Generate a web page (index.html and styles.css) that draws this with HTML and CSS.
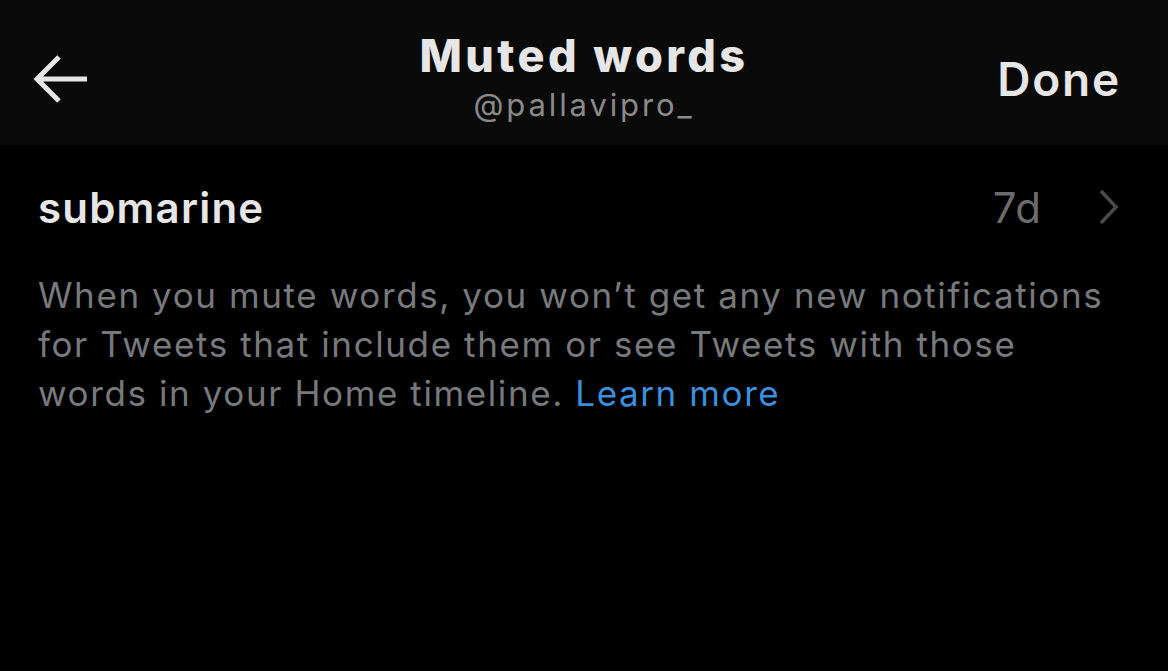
FILE: index.html
```html
<!DOCTYPE html>
<html lang="en">

<head>
    <meta charset="UTF-8">
    <meta name="viewport" content="width=device-width, initial-scale=1.0">
    <title>Muted words</title>
    <link rel="stylesheet" href="styles.css">
</head>

<body>
    <header class="top-bar">
        <a class="back-btn" href="#" aria-label="Back">
            <svg width="56" height="48" viewBox="0 0 56 48">
                <path d="M4 24 H54 M26 2 L4 24 L26 46" fill="none" stroke="#e6e6e6" stroke-width="5" stroke-linecap="butt" stroke-linejoin="miter"/>
            </svg>
        </a>
        <div class="title-block">
            <h1>Muted words</h1>
            <div class="handle">@pallavipro_</div>
        </div>
        <a class="done-btn" href="#">Done</a>
    </header>

    <div class="muted-list">
        <div class="muted-item">
            <span class="word">submarine</span>
            <span class="expires">7d</span>
            <svg class="chevron" width="22" height="38" viewBox="0 0 22 38">
                <path d="M3 3 L18 19 L3 35" fill="none" stroke="#4a4a4a" stroke-width="3.5"/>
            </svg>
        </div>
    </div>

    <p class="info">When you mute words, you won’t get any new notifications for Tweets that include them or see Tweets with those words in your Home timeline. <a href="#">Learn more</a></p>
</body>

</html>
```

FILE: styles.css
```css
body {
    font-family: Inter, "Noto Sans", sans-serif;
    background-color: #000;
    color: #e7e7e7;
    margin: 0;
    padding: 0;
    height: 100vh;
}

.top-bar {
    background-color: #0a0a0a;
    height: 145px;
    display: flex;
    align-items: center;
    justify-content: space-between;
    padding: 0 47px 0 33px;
    box-sizing: border-box;
}

.back-btn {
    display: flex;
    width: 154px;
    margin-top: 12px;
}

.title-block {
    align-self: flex-start;
    padding-top: 30px;
    text-align: center;
}

.title-block h1 {
    margin: 0;
    font-size: 45px;
    font-weight: 800;
    line-height: 52px;
    letter-spacing: 3.4px;
    color: #e6e6e6;
}

.handle {
    margin-top: 5px;
    font-size: 31px;
    line-height: 36px;
    letter-spacing: 2.9px;
    color: #8a8a8a;
}

.done-btn {
    width: 140px;
    text-align: right;
    font-size: 46px;
    font-weight: 600;
    letter-spacing: 1.8px;
    color: #e6e6e6;
    text-decoration: none;
    margin-top: 12px;
}

.muted-item {
    display: flex;
    align-items: center;
    padding: 0 48px 0 38px;
    height: 124px;
}

.word {
    flex: 1;
    font-size: 42px;
    font-weight: 600;
    letter-spacing: 1.2px;
    color: #e6e6e6;
}

.expires {
    font-size: 42px;
    letter-spacing: 1px;
    color: #6b6b6b;
    margin-right: 56px;
}

.info {
    margin: 2px 0 0;
    padding: 0 40px 0 38px;
    font-size: 35px;
    line-height: 49px;
    letter-spacing: 1.6px;
    color: #77797c;
}

.info a {
    color: #3b8fdf;
    text-decoration: none;
}
```
